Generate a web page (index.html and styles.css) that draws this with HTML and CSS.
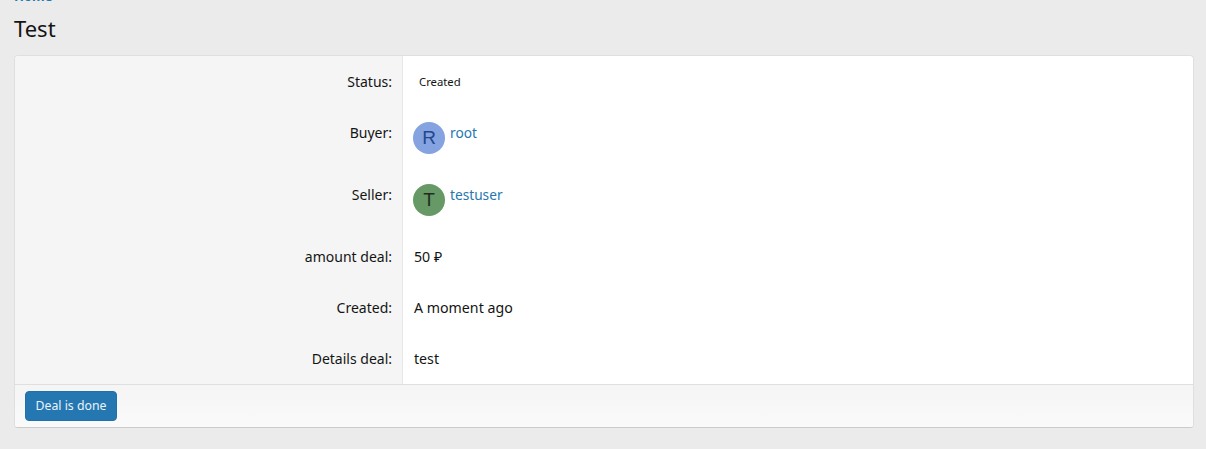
FILE: index.html
```html
<!DOCTYPE html>
<html lang="en">
<head>
<meta charset="utf-8">
<title>Test</title>
<link rel="stylesheet" href="styles.css">
</head>
<body>
<div class="page">
  <nav class="crumbs"><a href="#">Home</a></nav>
  <h1 class="title">Test</h1>
  <section class="block">
    <dl class="pair">
      <dt>Status:</dt>
      <dd><span class="status">Created</span></dd>
    </dl>
    <dl class="pair">
      <dt>Buyer:</dt>
      <dd><span class="user"><span class="avatar avatar-r">R</span><a href="#">root</a></span></dd>
    </dl>
    <dl class="pair">
      <dt>Seller:</dt>
      <dd><span class="user"><span class="avatar avatar-t">T</span><a href="#">testuser</a></span></dd>
    </dl>
    <dl class="pair">
      <dt>amount deal:</dt>
      <dd class="plain">50 ₽</dd>
    </dl>
    <dl class="pair">
      <dt>Created:</dt>
      <dd class="plain">A moment ago</dd>
    </dl>
    <dl class="pair">
      <dt>Details deal:</dt>
      <dd class="plain">test</dd>
    </dl>
    <footer class="foot">
      <button class="btn" type="button">Deal is done</button>
    </footer>
  </section>
</div>
</body>
</html>
```
FILE: styles.css
```css
* { box-sizing: border-box; }
html, body { margin: 0; padding: 0; }
body {
  height: 449px;
  overflow: hidden;
  background: #ebebeb;
  color: #141414;
  font-family: "Noto Sans", "Open Sans", sans-serif;
  font-size: 14px;
  line-height: 21px;
}
a { color: #2577b1; text-decoration: none; }
.page { padding: 0 12px 0 14px; }
.crumbs {
  height: 18px;
  margin-top: -13px;
  font-size: 13px;
  line-height: 18px;
  font-weight: 700;
}
.title {
  margin: 0;
  padding-top: 8px;
  height: 50px;
  font-size: 22px;
  line-height: 30px;
  font-weight: 400;
  color: #141414;
}
.block {
  width: 1180px;
  background: #fff;
  border: 1px solid #dfdfdf;
  border-bottom-color: #cbcbcb;
  border-radius: 4px;
  overflow: hidden;
}
.pair {
  display: grid;
  grid-template-columns: 388px 1fr;
  margin: 0;
}
.pair dt {
  padding: 15px 10px 15px 0;
  text-align: right;
  background: #f5f5f5;
  border-right: 1px solid #e7e7e7;
}
.pair dd {
  margin: 0;
  padding: 15px 10px;
}
.pair .plain {
  padding-left: 11px;
  font-size: 14.2px;
}
.status {
  display: block;
  padding-left: 6px;
  font-size: 11.3px;
}
.user { display: flex; align-items: flex-start; gap: 5px; }
.user a { font-size: 13.7px; }
.avatar {
  display: block;
  width: 32px;
  height: 32px;
  border-radius: 50%;
  font-family: "Liberation Sans", Arial, sans-serif;
  font-size: 19px;
  line-height: 32px;
  text-align: center;
}
.avatar-r { background: #85a3e0; color: #24478f; }
.avatar-t { background: #669966; color: #1f2e1f; }
.foot {
  height: 43px;
  padding: 6px 10px;
  border-top: 1px solid #dfdfdf;
  background: linear-gradient(to bottom, #f5f5f5, #fafafa);
}
.btn {
  display: block;
  width: 92px;
  height: 30px;
  padding: 0;
  border: 1px solid #2270a8;
  border-radius: 4px;
  background: #2577b1;
  color: #ebf3f9;
  font-family: inherit;
  font-size: 12.3px;
  line-height: 18px;
}
```
